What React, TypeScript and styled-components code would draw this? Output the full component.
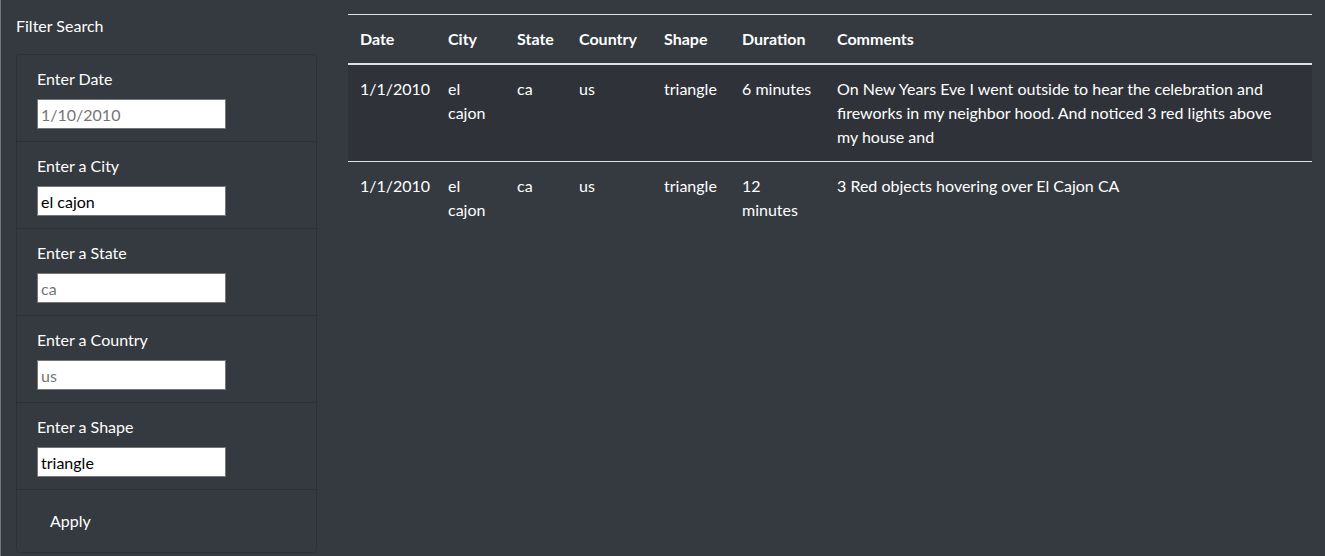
import styled, { createGlobalStyle } from 'styled-components'

const GlobalStyle = createGlobalStyle`
  html, body {
    margin: 0;
    padding: 0;
    background: #343a40;
  }
  body {
    font-family: Lato, "Segoe UI", "Noto Sans", sans-serif;
    color: #ffffff;
    font-size: 16px;
    line-height: 1.5;
  }
`

type Sighting = {
  date: string
  city: string
  state: string
  country: string
  shape: string
  duration: string
  comments: string
}

const sightings: Sighting[] = [
  {
    date: '1/1/2010',
    city: 'el cajon',
    state: 'ca',
    country: 'us',
    shape: 'triangle',
    duration: '6 minutes',
    comments:
      'On New Years Eve I went outside to hear the celebration and fireworks in my neighbor hood. And noticed 3 red lights above my house and',
  },
  {
    date: '1/1/2010',
    city: 'el cajon',
    state: 'ca',
    country: 'us',
    shape: 'triangle',
    duration: '12 minutes',
    comments: '3 Red objects hovering over El Cajon CA',
  },
]

const filters = [
  { label: 'Enter Date', placeholder: '1/10/2010', value: '' },
  { label: 'Enter a City', placeholder: 'los angeles', value: 'el cajon' },
  { label: 'Enter a State', placeholder: 'ca', value: '' },
  { label: 'Enter a Country', placeholder: 'us', value: '' },
  { label: 'Enter a Shape', placeholder: 'circle', value: 'triangle' },
]

const columns: { title: string; width: number; key: keyof Sighting }[] = [
  { title: 'Date', width: 88, key: 'date' },
  { title: 'City', width: 69, key: 'city' },
  { title: 'State', width: 62, key: 'state' },
  { title: 'Country', width: 85, key: 'country' },
  { title: 'Shape', width: 78, key: 'shape' },
  { title: 'Duration', width: 95, key: 'duration' },
  { title: 'Comments', width: 487, key: 'comments' },
]

const Page = styled.div`
  display: flex;
  min-height: 556px;
  box-sizing: border-box;
  border-left: 1px solid #73767a;
`

const Sidebar = styled.aside`
  width: 301px;
  padding: 14px 15px 4px 15px;
  flex-shrink: 0;
`

const SidebarTitle = styled.div`
  font-size: 16px;
  line-height: 24px;
  margin-bottom: 16px;
`

const FilterList = styled.ul`
  list-style: none;
  margin: 0;
  padding: 0;
  border: 1px solid rgba(0, 0, 0, 0.15);
  border-radius: 4px;
`

const FilterItem = styled.li`
  padding: 12px 20px;
  border-bottom: 1px solid rgba(0, 0, 0, 0.15);

  &:last-child {
    border-bottom: none;
  }
`

const FilterLabel = styled.label`
  display: block;
  line-height: 24px;
  margin-bottom: 8px;
`

const FilterInput = styled.input`
  box-sizing: border-box;
  width: 189px;
  height: 30px;
  padding: 1px 3px;
  font-family: inherit;
  font-size: 16px;
  color: #000;
  background: #fff;
  border: 1px solid #767676;
  outline: none;

  &::placeholder {
    color: #757575;
  }
`

const ApplyButton = styled.button`
  font-family: inherit;
  font-size: 16px;
  line-height: 24px;
  padding: 7px 13px;
  background: transparent;
  border: none;
  color: #fff;
  cursor: pointer;
`

const Main = styled.main`
  flex: 1;
  padding: 14px 13px 0 16px;
`

const Table = styled.table`
  width: 964px;
  border-collapse: collapse;
  table-layout: fixed;
`

const HeadCell = styled.th`
  text-align: left;
  font-weight: 700;
  padding: 12px;
  line-height: 24px;
  vertical-align: bottom;
  border-top: 1px solid #dee2e6;
  border-bottom: 2px solid #dee2e6;
`

const Row = styled.tr<{ $striped: boolean }>`
  background: ${({ $striped }) => ($striped ? '#2f3339' : 'transparent')};
`

const Cell = styled.td<{ $padRight?: number }>`
  padding: 12px ${({ $padRight }) => $padRight ?? 12}px 12px 12px;
  line-height: 24px;
  vertical-align: top;
  border-top: 1px solid #dee2e6;

  tbody tr:first-child & {
    border-top: none;
  }
`

export default function App() {
  return (
    <>
      <GlobalStyle />
      <Page>
        <Sidebar>
          <SidebarTitle>Filter Search</SidebarTitle>
          <FilterList>
            {filters.map((f) => (
              <FilterItem key={f.label}>
                <FilterLabel>{f.label}</FilterLabel>
                <FilterInput
                  type="text"
                  placeholder={f.value ? undefined : f.placeholder}
                  defaultValue={f.value}
                />
              </FilterItem>
            ))}
            <FilterItem>
              <ApplyButton type="button">Apply</ApplyButton>
            </FilterItem>
          </FilterList>
        </Sidebar>
        <Main>
          <Table>
            <colgroup>
              {columns.map((c) => (
                <col key={c.key} style={{ width: c.width }} />
              ))}
            </colgroup>
            <thead>
              <tr>
                {columns.map((c) => (
                  <HeadCell key={c.key}>{c.title}</HeadCell>
                ))}
              </tr>
            </thead>
            <tbody>
              {sightings.map((s, i) => (
                <Row key={i} $striped={i % 2 === 0}>
                  {columns.map((c) => (
                    <Cell key={c.key} $padRight={c.key === 'comments' ? 30 : 12}>
                      {s[c.key]}
                    </Cell>
                  ))}
                </Row>
              ))}
            </tbody>
          </Table>
        </Main>
      </Page>
    </>
  )
}
